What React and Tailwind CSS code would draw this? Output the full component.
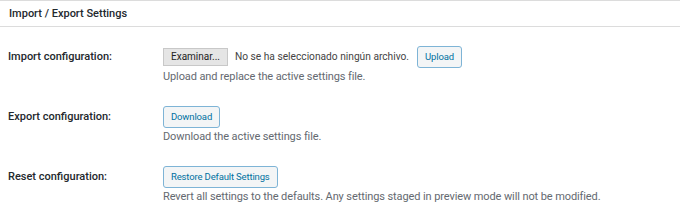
export default function App() {
  const font = { fontFamily: 'Roboto, "Liberation Sans", sans-serif' }
  const btn = 'h-[22px] px-[7px] rounded-[3px] border border-[#7eb4d6] bg-[#f3f5f6] text-[#0071a1] text-[9.5px] tracking-[-0.15px] leading-none'
  return (
    <div className="w-[680px] h-[218px] bg-white text-[#444] text-[11px] leading-[14px]" style={font}>
      <div className="h-[27px] border-t border-b border-[#dcdcdc] flex items-center px-[9px] bg-white">
        <span className="text-[11px] font-medium text-[#23282d]">Import / Export Settings</span>
      </div>

      <div className="flex mt-[19px]">
        <div className="w-[163px] pl-[8px] h-[22px] flex items-center font-medium text-[#23282d]">Import configuration:</div>
        <div>
          <div className="flex items-center h-[22px]">
            <span className="h-[18px] px-[7px] flex items-center bg-[#e5e5e5] border border-[#c8c8c8] text-[#222] text-[10px]">Examinar...</span>
            <span className="ml-[7px] text-[#444] text-[10.2px]">No se ha seleccionado ningún archivo.</span>
            <button className={`${btn} ml-[8px]`}>Upload</button>
          </div>
          <div className="mt-[2px] text-[#646970] tracking-[-0.1px]">Upload and replace the active settings file.</div>
        </div>
      </div>

      <div className="flex mt-[22px]">
        <div className="w-[163px] pl-[8px] h-[22px] flex items-center font-medium text-[#23282d]">Export configuration:</div>
        <div>
          <button className={btn}>Download</button>
          <div className="mt-[2px] text-[#646970] tracking-[-0.1px]">Download the active settings file.</div>
        </div>
      </div>

      <div className="flex mt-[22px]">
        <div className="w-[163px] pl-[8px] h-[22px] flex items-center font-medium text-[#23282d]">Reset configuration:</div>
        <div>
          <button className={btn}>Restore Default Settings</button>
          <div className="mt-[2px] text-[#646970] tracking-[-0.1px]">Revert all settings to the defaults. Any settings staged in preview mode will not be modified.</div>
        </div>
      </div>
    </div>
  )
}
